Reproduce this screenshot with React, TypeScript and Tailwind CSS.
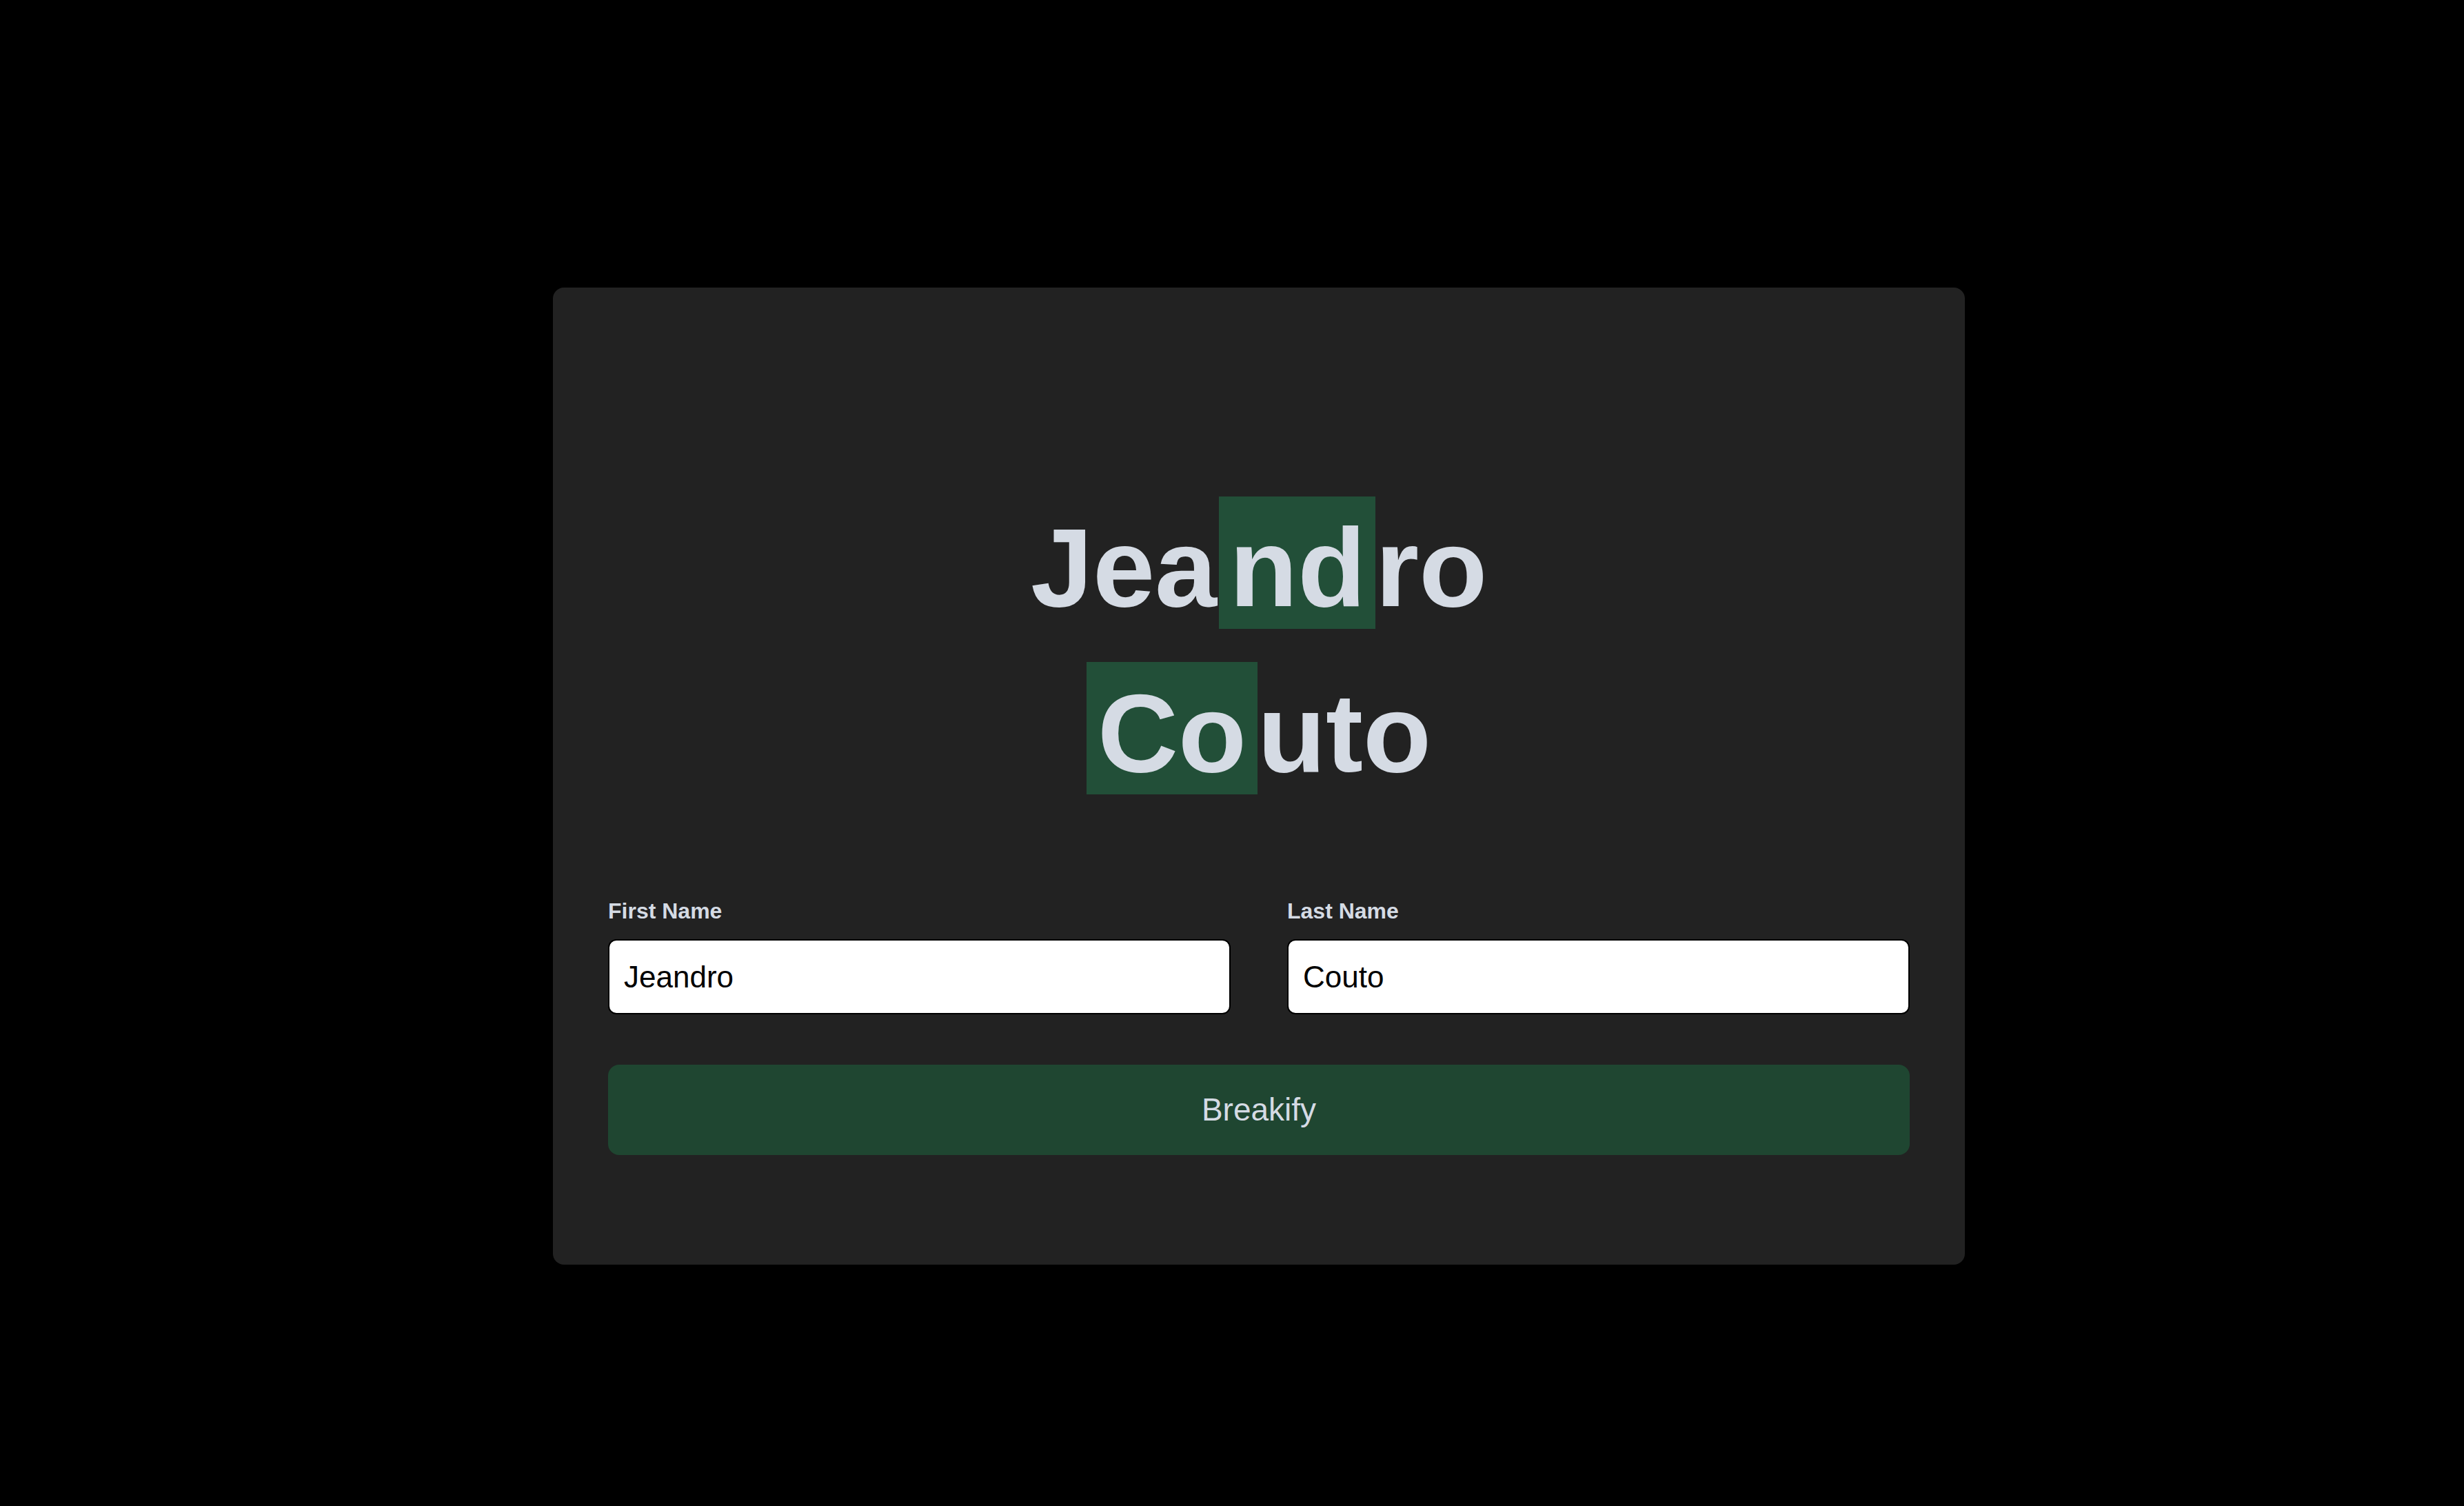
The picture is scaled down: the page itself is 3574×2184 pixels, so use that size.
import React from "react";

const font = { fontFamily: '"Liberation Sans", Arial, Helvetica, sans-serif' };

function Part({ text, box, extra }: { text: string; box?: boolean; extra?: string }) {
  return (
    <span
      className={
        "block h-[192px] leading-[206px] whitespace-pre " +
        (box ? "bg-[#224f38] " : "") +
        (extra ?? "")
      }
    >
      {text}
    </span>
  );
}

export default function App() {
  return (
    <div className="min-h-[2184px] w-full bg-black" style={font}>
      <div className="pt-[417px] pl-[802px]">
        <div className="w-[2048px] h-[1417px] rounded-[16px] bg-[#222222] px-[80px] pt-[303px] pb-[159px] flex flex-col">
          <div className="flex flex-col items-center gap-[48px] text-[162px] font-bold text-[#d5dbe4]">
            <div className="flex items-start">
              <Part text="Jea" />
              <Part text="nd" box extra="pl-[15px] pr-[14px] ml-[3px]" />
              <Part text="ro" />
            </div>
            <div className="flex items-start">
              <Part text="Co" box extra="pl-[16px] pr-[16px]" />
              <Part text="uto" />
            </div>
          </div>

          <div className="mt-[151px] grid grid-cols-2 gap-[82px]">
            <label className="flex flex-col">
              <span className="text-[32px] leading-[37px] font-bold text-[#d5dbe4]">First Name</span>
              <input
                defaultValue="Jeandro"
                className="mt-[22px] h-[109px] w-full rounded-[12px] border-2 border-black bg-white px-[21px] text-[44px] text-black outline-none"
                style={font}
              />
            </label>
            <label className="flex flex-col">
              <span className="text-[32px] leading-[37px] font-bold text-[#d5dbe4]">Last Name</span>
              <input
                defaultValue="Couto"
                className="mt-[22px] h-[109px] w-full rounded-[12px] border-2 border-black bg-white px-[21px] text-[44px] text-black outline-none"
                style={font}
              />
            </label>
          </div>

          <button
            className="mt-[73px] h-[131px] w-full rounded-[16px] bg-[#1f4631] text-[46px] text-[#d5dbe4]"
            style={font}
          >
            Breakify
          </button>
        </div>
      </div>
    </div>
  );
}
